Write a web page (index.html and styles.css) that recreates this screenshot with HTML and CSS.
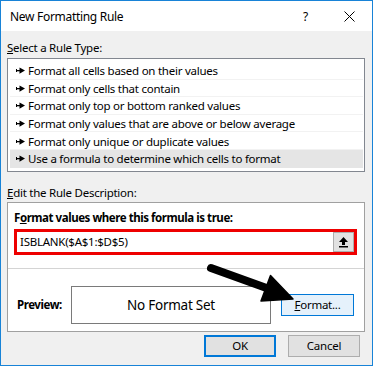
FILE: index.html
```html
<!DOCTYPE html>
<html>
<head>
<meta charset="utf-8">
<link rel="stylesheet" href="styles.css">
</head>
<body>
<div class="dialog">
  <div class="titlebar">
    <span class="title">New Formatting Rule</span>
    <span class="help">?</span>
    <svg class="close" width="11" height="11" viewBox="0 0 11 11"><path d="M0.5 0.5 L10.5 10.5 M10.5 0.5 L0.5 10.5" stroke="#000" stroke-width="1"/></svg>
  </div>
  <div class="content">
    <div class="label"><u>S</u>elect a Rule Type:</div>
    <ul class="rule-list">
      <li><svg class="bullet" width="9" height="7" viewBox="0 0 9 7"><rect x="0" y="3" width="5" height="1.3" fill="#000"/><rect x="0" y="2" width="1" height="3" fill="#000"/><polygon points="3.5,0.5 9,3.6 3.5,6.7" fill="#000"/></svg>Format all cells based on their values</li>
      <li><svg class="bullet" width="9" height="7" viewBox="0 0 9 7"><rect x="0" y="3" width="5" height="1.3" fill="#000"/><rect x="0" y="2" width="1" height="3" fill="#000"/><polygon points="3.5,0.5 9,3.6 3.5,6.7" fill="#000"/></svg>Format only cells that contain</li>
      <li><svg class="bullet" width="9" height="7" viewBox="0 0 9 7"><rect x="0" y="3" width="5" height="1.3" fill="#000"/><rect x="0" y="2" width="1" height="3" fill="#000"/><polygon points="3.5,0.5 9,3.6 3.5,6.7" fill="#000"/></svg>Format only top or bottom ranked values</li>
      <li><svg class="bullet" width="9" height="7" viewBox="0 0 9 7"><rect x="0" y="3" width="5" height="1.3" fill="#000"/><rect x="0" y="2" width="1" height="3" fill="#000"/><polygon points="3.5,0.5 9,3.6 3.5,6.7" fill="#000"/></svg>Format only values that are above or below average</li>
      <li><svg class="bullet" width="9" height="7" viewBox="0 0 9 7"><rect x="0" y="3" width="5" height="1.3" fill="#000"/><rect x="0" y="2" width="1" height="3" fill="#000"/><polygon points="3.5,0.5 9,3.6 3.5,6.7" fill="#000"/></svg>Format only unique or duplicate values</li>
      <li class="selected"><svg class="bullet" width="9" height="7" viewBox="0 0 9 7"><rect x="0" y="3" width="5" height="1.3" fill="#000"/><rect x="0" y="2" width="1" height="3" fill="#000"/><polygon points="3.5,0.5 9,3.6 3.5,6.7" fill="#000"/></svg>Use a formula to determine which cells to format</li>
    </ul>
    <div class="label label-edit"><u>E</u>dit the Rule Description:</div>
    <div class="desc">
      <div class="desc-top">
        <div class="heading">F<u>o</u>rmat values where this formula is true:</div>
        <div class="formula-box">
          <div class="formula-text">ISBLANK($A$1:$D$5)</div>
          <div class="collapse-btn">
            <svg width="11" height="12" viewBox="0 0 11 12"><polygon points="5.5,1 10,6 7,6 7,9 4,9 4,6 1,6" fill="#000"/><rect x="1" y="10" width="9" height="1.5" fill="#000"/></svg>
          </div>
        </div>
      </div>
      <div class="preview-row">
        <span class="heading preview-label">Preview:</span>
        <div class="preview-box">No Format Set</div>
        <div class="btn format-btn"><u>F</u>ormat...</div>
      </div>
    </div>
    <div class="actions">
      <div class="btn ok-btn">OK</div>
      <div class="btn">Cancel</div>
    </div>
  </div>
  <svg class="annot-arrow" width="373" height="366" viewBox="0 0 373 366">
    <line x1="211" y1="268" x2="272" y2="290" stroke="#000" stroke-width="8" stroke-linecap="round"/>
    <polygon points="270.5,275.5 261,301 293,299" fill="#000" stroke="#000" stroke-width="1.5" stroke-linejoin="round"/>
  </svg>
</div>
</body>
</html>
```

FILE: styles.css
```css
* { box-sizing: border-box; }
body {
  margin: 0;
  font-family: "Noto Sans", "Segoe UI", sans-serif;
  font-size: 11.5px;
  letter-spacing: -0.25px;
  color: #000;
}
.dialog {
  position: relative;
  width: 373px;
  height: 366px;
  border: 1px solid #1883d7;
  background: #f0f0f0;
  display: flex;
  flex-direction: column;
}
.titlebar {
  height: 30px;
  background: #fff;
  display: flex;
  align-items: center;
  padding: 0 17px 0 9px;
  flex: none;
}
.title { flex: 1; font-size: 12px; letter-spacing: -0.3px; }
.help { width: 10px; font-size: 12px; margin-right: 31px; }
.close { display: block; }
.content {
  flex: 1;
  padding: 9px 7px 0 6px;
  display: flex;
  flex-direction: column;
}
.label { height: 16px; line-height: 16px; }
.label-edit { margin-top: 13px; }
.rule-list {
  list-style: none;
  margin: 2px 0 0;
  padding: 3px 1px 3px 2px;
  background: #fff;
  border: 1px solid #828790;
}
.rule-list li {
  height: 17.6px;
  display: flex;
  align-items: center;
  padding-left: 6px;
  gap: 3px;
  white-space: nowrap;
  box-shadow: inset 0 -1px 0 #f2f2f2;
}
.rule-list li.selected { background: #e5e5e5; box-shadow: none; }
.bullet { flex: none; display: block; }
.desc {
  margin-top: 1px;
  background: #fff;
  border: 1px solid #a0a0a0;
}
.desc-top {
  padding: 7px 7px 13px 6px;
  border-bottom: 1px solid #d4d4d4;
}
.heading { font-weight: bold; line-height: 16px; height: 16px; letter-spacing: -0.45px; }
.formula-box {
  margin-top: 3px;
  height: 26px;
  border: 3px solid #ee0000;
  display: flex;
  align-items: stretch;
}
.formula-text { flex: 1; padding-left: 3px; line-height: 20px; }
.collapse-btn {
  width: 21px;
  background: #e1e1e1;
  border: 1px solid #adadad;
  display: flex;
  align-items: center;
  justify-content: center;
}
.collapse-btn svg { display: block; }
.preview-row {
  display: flex;
  align-items: center;
  padding: 17px 0 7px 9px;
}
.preview-label { width: 54px; flex: none; }
.preview-box {
  width: 200px;
  height: 38px;
  border: 1px solid #7a7a7a;
  display: flex;
  align-items: center;
  justify-content: center;
  font-size: 13.5px;
  flex: none;
}
.btn {
  width: 72px;
  height: 22px;
  background: #e1e1e1;
  border: 1px solid #adadad;
  display: flex;
  align-items: center;
  justify-content: center;
  flex: none;
}
.format-btn {
  margin-left: 10px;
  width: 73px;
  background: #e5f1fb;
  border-color: #0078d7;
}
.actions {
  margin-top: 3px;
  display: flex;
  justify-content: flex-end;
  gap: 12px;
  padding-right: 5px;
}
.ok-btn { border: 2px solid #0078d7; }
.annot-arrow {
  position: absolute;
  left: -1px;
  top: -1px;
  pointer-events: none;
}
```
